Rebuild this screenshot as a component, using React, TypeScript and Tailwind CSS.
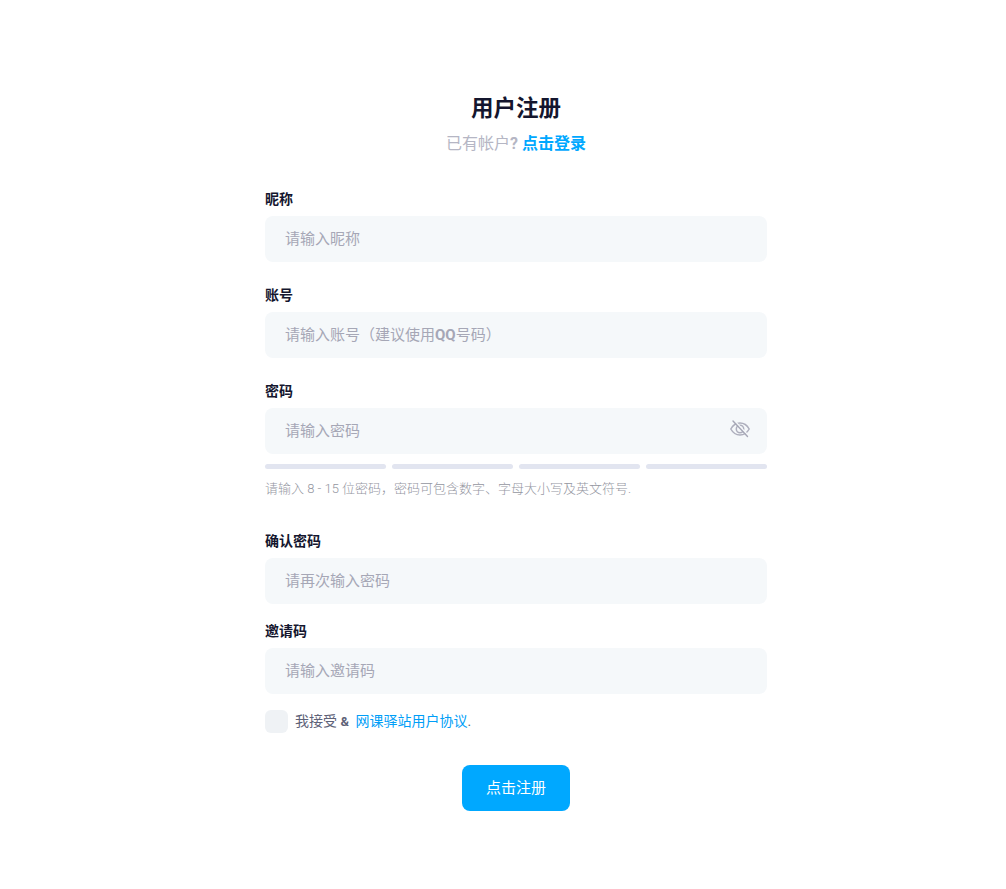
const font = "font-['Roboto','Noto_Sans_CJK_SC',sans-serif]";

const labelClass = 'block h-[21px] text-[14px] leading-[21px] font-bold text-[#14162e]';
const inputClass =
  'block h-[46px] w-full rounded-lg bg-[#f5f8fa] px-5 text-[15px] text-[#14162e] outline-none placeholder:text-[#a6a7b6]';

function Field({ label, placeholder }: { label: string; placeholder: string }) {
  return (
    <div>
      <label className={labelClass}>{label}</label>
      <input className={`mt-[6px] ${inputClass}`} placeholder={placeholder} />
    </div>
  );
}

function EyeSlash() {
  return (
    <svg viewBox="0 0 20 20" className="h-5 w-5" fill="none" strokeLinecap="round">
      <g stroke="#aeafbd" strokeWidth="1.5">
        <path d="M.8 10c2.200-4 5.300-6 9.200-6s7 2 9.200 6c-2.200 4-5.300 6-9.200 6S3 14 .8 10z" />
        <circle cx="10" cy="10" r="3.700" />
      </g>
      <path d="M4.300 1.500 18.300 16.500" stroke="#f5f8fa" strokeWidth="1.500" />
      <path d="M3 2 17.500 17.500" stroke="#a6a7b6" strokeWidth="1.400" />
    </svg>
  );
}

export default function App() {
  return (
    <div className={`min-h-[889px] bg-white pt-[94px] ${font}`}>
      <div className="ml-[265px] w-[502px]">
        <h1 className="text-center text-[22.5px] leading-[28px] font-bold text-[#14162e]">用户注册</h1>
        <p className="mt-[10px] text-center text-[16px] leading-[24px] text-[#b5b6c4]">
          已有帐户<b>?</b> <a className="font-bold text-[#00a8ff]">点击登录</a>
        </p>

        <div className="mt-[33px]">
          <Field label="昵称" placeholder="请输入昵称" />
        </div>
        <div className="mt-[23px]">
          <label className={labelClass}>账号</label>
          <div className={`mt-[6px] flex items-center ${inputClass} whitespace-pre text-[#a6a7b6]`}>
            <span>
              请输入账号（建议使用<b>QQ</b>号码）
            </span>
          </div>
        </div>
        <div className="mt-[23px]">
          <label className={labelClass}>密码</label>
          <div className="relative mt-[6px]">
            <input className={inputClass} placeholder="请输入密码" />
            <span className="absolute top-[11px] right-[17px]">
              <EyeSlash />
            </span>
          </div>
          <div className="mt-[10px] flex gap-[6px]">
            <div className="h-[5px] flex-1 rounded-full bg-[#e2e5f0]" />
            <div className="h-[5px] flex-1 rounded-full bg-[#e2e5f0]" />
            <div className="h-[5px] flex-1 rounded-full bg-[#e2e5f0]" />
            <div className="h-[5px] flex-1 rounded-full bg-[#e2e5f0]" />
          </div>
          <p className="mt-[10px] text-[13px] leading-[19px] font-light text-[#94969f]">
            请输入 8 - 15 位密码，密码可包含数字、字母大小写及英文符号.
          </p>
        </div>
        <div className="mt-[33px]">
          <Field label="确认密码" placeholder="请再次输入密码" />
        </div>
        <div className="mt-[17px]">
          <Field label="邀请码" placeholder="请输入邀请码" />
        </div>

        <div className="mt-[16px] flex items-center">
          <div className="h-[23px] w-[23px] rounded-md bg-[#eff2f5]" />
          <span className="ml-[7px] text-[14px] leading-[20px] text-[#5e6278]">
            我接受 <b className="text-[13px]">&amp;</b> <a className="ml-[3px] text-[#009ef7]">网课驿站用户协议</a>.
          </span>
        </div>

        <div className="mt-[32px] flex justify-center">
          <button className="h-[46px] w-[108px] rounded-lg bg-[#00a8ff] text-[15px] text-white">点击注册</button>
        </div>
      </div>
    </div>
  );
}
